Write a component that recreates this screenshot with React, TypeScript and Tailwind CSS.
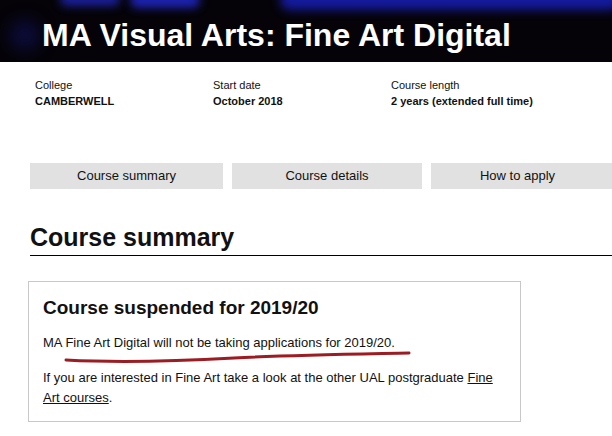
import React from "react";

export default function App() {
  const font = { fontFamily: '"Liberation Sans", Arial, sans-serif' };
  return (
    <div className="w-[612px] h-[436px] overflow-hidden bg-white text-[#111]" style={font}>
      <header className="relative h-[62px] bg-[#050308] overflow-hidden">
        <div className="absolute left-[60px] top-[-8px] w-[60px] h-[14px] rounded-full bg-[#1a1f9a] blur-[4px]" />
        <div className="absolute left-[130px] top-[-8px] w-[70px] h-[16px] rounded-full bg-[#1c22b0] blur-[4px]" />
        <div className="absolute left-[280px] top-[-10px] w-[340px] h-[20px] rounded-full bg-[#141a9c] blur-[5px]" />
        <div className="absolute left-[10px] top-[20px] w-[30px] h-[30px] rounded-full bg-[#0c0c3a] blur-[8px]" />
        <h1 className="relative pl-[42px] pt-[17px] text-[32px] leading-[36px] font-bold text-white">
          MA Visual Arts: Fine Art Digital
        </h1>
      </header>

      <div className="flex pl-[35px] pt-[15px] text-[11px] leading-[16px]">
        <div className="w-[178px]">
          <div>College</div>
          <div className="font-bold">CAMBERWELL</div>
        </div>
        <div className="w-[178px]">
          <div>Start date</div>
          <div className="font-bold">October 2018</div>
        </div>
        <div>
          <div>Course length</div>
          <div className="font-bold">2 years (extended full time)</div>
        </div>
      </div>

      <nav className="flex gap-[9px] pl-[30px] mt-[54px] text-[13px]">
        <div className="w-[193px] h-[26px] bg-[#e1e1e1] flex items-center justify-center">Course summary</div>
        <div className="w-[190px] h-[26px] bg-[#e1e1e1] flex items-center justify-center">Course details</div>
        <div className="flex-1 h-[26px] bg-[#e1e1e1] flex items-center justify-center pr-[8px]">How to apply</div>
      </nav>

      <div className="pl-[30px] mt-[33px]">
        <h2 className="text-[25px] leading-[30px] font-bold border-b border-black pb-[3px]">Course summary</h2>

        <div className="relative mt-[25px] w-[493px] ml-[-2px] border border-[#c8c8c8] px-[14px] pt-[14px] pb-[13px]">
          <h3 className="text-[19px] leading-[24px] font-bold">Course suspended for 2019/20</h3>
          <p className="mt-[13px] text-[13px] leading-[20px]">
            MA Fine Art Digital will not be taking applications for 2019/20.
          </p>
          <svg className="absolute left-[34px] top-[68px]" width="352" height="16" viewBox="0 0 352 16">
            <path
              d="M3 10 C40 12 100 12 171 8 C230 5 300 4 346 3"
              fill="none"
              stroke="#9b1c22"
              strokeWidth="3"
              strokeLinecap="round"
            />
          </svg>
          <p className="mt-[15px] text-[13px] leading-[20px]">
            If you are interested in Fine Art take a look at the other UAL postgraduate{" "}
            <span className="underline">Fine Art courses</span>.
          </p>
        </div>
      </div>
    </div>
  );
}
